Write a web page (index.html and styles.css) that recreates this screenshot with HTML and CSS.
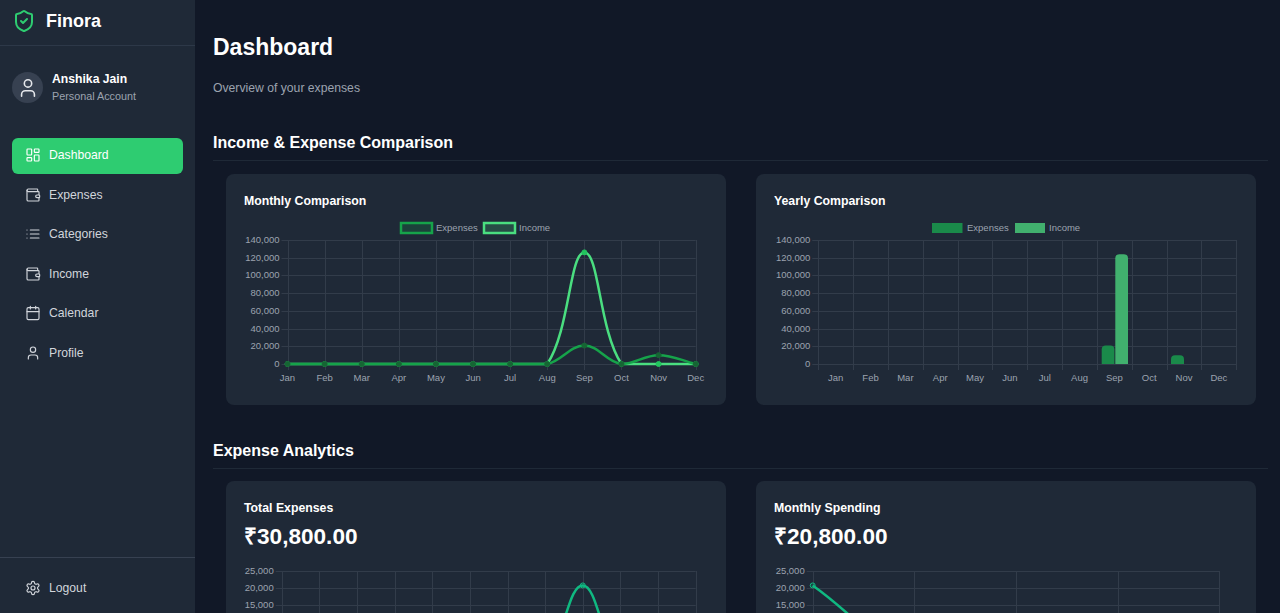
FILE: index.html
```html
<!DOCTYPE html>
<html lang="en">
<head>
    <meta charset="UTF-8">
    <title>Finora - Dashboard</title>
    <link rel="stylesheet" href="styles.css">
</head>
<body>
    <aside class="sidebar">
        <div class="logo">
            <svg class="logo-icon" viewBox="0 0 24 24"><path d="M20 13c0 5-3.5 7.5-7.66 8.95a1 1 0 0 1-.67-.01C7.5 20.5 4 18 4 13V6a1 1 0 0 1 1-1c2 0 4.5-1.2 6.24-2.72a1.17 1.17 0 0 1 1.52 0C14.51 3.81 17 5 19 5a1 1 0 0 1 1 1z"/><path d="m9 12 2 2 4-4"/></svg>
            <span class="logo-text">Finora</span>
        </div>
        <div class="user">
            <div class="avatar">
                <svg viewBox="0 0 24 24"><path d="M19 21v-2a4 4 0 0 0-4-4H9a4 4 0 0 0-4 4v2"/><circle cx="12" cy="7" r="4"/></svg>
            </div>
            <div>
                <div class="user-name">Anshika Jain</div>
                <div class="user-type">Personal Account</div>
            </div>
        </div>
        <nav class="nav">
            <a class="nav-item active">
                <svg viewBox="0 0 24 24"><rect x="3" y="3" width="7" height="9" rx="1"/><rect x="14" y="3" width="7" height="5" rx="1"/><rect x="14" y="12" width="7" height="9" rx="1"/><rect x="3" y="16" width="7" height="5" rx="1"/></svg>
                Dashboard
            </a>
            <a class="nav-item">
                <svg viewBox="0 0 24 24"><path d="M19 7V4a1 1 0 0 0-1-1H5a2 2 0 0 0 0 4h15a1 1 0 0 1 1 1v4h-3a2 2 0 0 0 0 4h3a1 1 0 0 0 1-1v-2a1 1 0 0 0-1-1"/><path d="M3 5v14a2 2 0 0 0 2 2h15a1 1 0 0 0 1-1v-4"/></svg>
                Expenses
            </a>
            <a class="nav-item">
                <svg viewBox="0 0 24 24"><path d="M8 6h13M8 12h13M8 18h13M3 6h.01M3 12h.01M3 18h.01"/></svg>
                Categories
            </a>
            <a class="nav-item">
                <svg viewBox="0 0 24 24"><path d="M19 7V4a1 1 0 0 0-1-1H5a2 2 0 0 0 0 4h15a1 1 0 0 1 1 1v4h-3a2 2 0 0 0 0 4h3a1 1 0 0 0 1-1v-2a1 1 0 0 0-1-1"/><path d="M3 5v14a2 2 0 0 0 2 2h15a1 1 0 0 0 1-1v-4"/></svg>
                Income
            </a>
            <a class="nav-item">
                <svg viewBox="0 0 24 24"><path d="M8 2v4M16 2v4"/><rect x="3" y="4" width="18" height="18" rx="2"/><path d="M3 10h18"/></svg>
                Calendar
            </a>
            <a class="nav-item">
                <svg viewBox="0 0 24 24"><path d="M19 21v-2a4 4 0 0 0-4-4H9a4 4 0 0 0-4 4v2"/><circle cx="12" cy="7" r="4"/></svg>
                Profile
            </a>
        </nav>
        <div class="sidebar-bottom">
            <a class="nav-item">
                <svg viewBox="0 0 24 24"><path d="M12.22 2h-.44a2 2 0 0 0-2 2v.18a2 2 0 0 1-1 1.73l-.43.25a2 2 0 0 1-2 0l-.15-.08a2 2 0 0 0-2.73.73l-.22.38a2 2 0 0 0 .73 2.73l.15.1a2 2 0 0 1 1 1.72v.51a2 2 0 0 1-1 1.74l-.15.09a2 2 0 0 0-.73 2.73l.22.38a2 2 0 0 0 2.73.73l.15-.08a2 2 0 0 1 2 0l.43.25a2 2 0 0 1 1 1.73V20a2 2 0 0 0 2 2h.44a2 2 0 0 0 2-2v-.18a2 2 0 0 1 1-1.73l.43-.25a2 2 0 0 1 2 0l.15.08a2 2 0 0 0 2.73-.73l.22-.39a2 2 0 0 0-.73-2.73l-.15-.08a2 2 0 0 1-1-1.74v-.5a2 2 0 0 1 1-1.74l.15-.09a2 2 0 0 0 .73-2.73l-.22-.38a2 2 0 0 0-2.73-.73l-.15.08a2 2 0 0 1-2 0l-.43-.25a2 2 0 0 1-1-1.73V4a2 2 0 0 0-2-2z"/><circle cx="12" cy="12" r="3"/></svg>
                Logout
            </a>
        </div>
    </aside>

    <main class="main">
        <h1 class="page-title">Dashboard</h1>
        <p class="page-sub">Overview of your expenses</p>

        <section class="section">
            <h2 class="section-title">Income &amp; Expense Comparison</h2>
            <div class="card-grid">
                <div class="card">
                    <h3 class="card-title">Monthly Comparison</h3>
                    <svg class="chart" id="monthlyComparison" width="464" height="169"></svg>
                </div>
                <div class="card">
                    <h3 class="card-title">Yearly Comparison</h3>
                    <svg class="chart" id="yearlyComparison" width="464" height="169"></svg>
                </div>
            </div>
        </section>

        <section class="section section-compact">
            <h2 class="section-title">Expense Analytics</h2>
            <div class="card-grid">
                <div class="card">
                    <h3 class="card-title">Total Expenses</h3>
                    <div class="card-amount">₹30,800.00</div>
                    <svg class="chart" id="totalExpenses" width="464" height="54"></svg>
                </div>
                <div class="card">
                    <h3 class="card-title">Monthly Spending</h3>
                    <div class="card-amount">₹20,800.00</div>
                    <svg class="chart" id="monthlySpending" width="464" height="54"></svg>
                </div>
            </div>
        </section>
    </main>

    <script src="charts.js"></script>
</body>
</html>
```

FILE: styles.css
```css
* {
    box-sizing: border-box;
}
html, body {
    height: 100%;
}
body {
    margin: 0;
    display: flex;
    overflow: hidden;
    font-family: "Liberation Sans", Arial, sans-serif;
    background-color: #111827;
    color: #fff;
}

/* sidebar */
.sidebar {
    width: 195px;
    height: 100vh;
    flex-shrink: 0;
    display: flex;
    flex-direction: column;
    background-color: #1f2937;
}
.logo {
    height: 46px;
    display: flex;
    align-items: center;
    gap: 10px;
    padding: 0 0 3px 12px;
    border-bottom: 1px solid #2d3848;
}
.logo-icon {
    width: 24px;
    height: 24px;
    fill: none;
    stroke: #2ecc71;
    stroke-width: 2;
    stroke-linecap: round;
    stroke-linejoin: round;
}
.logo-text {
    font-size: 18px;
    font-weight: 700;
}
.user {
    display: flex;
    align-items: center;
    gap: 9px;
    padding: 25px 12px 0;
}
.avatar {
    width: 31px;
    height: 31px;
    border-radius: 50%;
    display: flex;
    align-items: center;
    justify-content: center;
    background-color: #374151;
}
.avatar svg {
    width: 22px;
    height: 22px;
    fill: none;
    stroke: #e5e7eb;
    stroke-width: 1.75;
    stroke-linecap: round;
    stroke-linejoin: round;
}
.user-name {
    font-size: 12.2px;
    font-weight: 700;
    line-height: 16px;
}
.user-type {
    font-size: 10.8px;
    line-height: 16px;
    margin-top: 1px;
    color: #9ca3af;
}
.nav {
    display: flex;
    flex-direction: column;
    gap: 3.5px;
    padding: 34px 12px 0;
}
.nav-item {
    height: 36px;
    display: flex;
    align-items: center;
    gap: 8.5px;
    padding: 0 12px 2px 12.5px;
    border-radius: 6px;
    font-size: 12.2px;
    color: #d1d5db;
}
.nav-item svg {
    width: 16px;
    height: 16px;
    flex-shrink: 0;
    fill: none;
    stroke: currentColor;
    stroke-width: 1.75;
    stroke-linecap: round;
    stroke-linejoin: round;
}
.nav-item.active {
    background-color: #2ecc71;
    color: #fff;
}
.sidebar-bottom {
    margin-top: auto;
    padding: 13px 12px 6px;
    border-top: 1px solid #374151;
}

/* main content */
.main {
    flex: 1;
    height: 100vh;
    overflow: hidden;
    padding: 32px 12px 0 18px;
}
.page-title {
    margin: 0;
    font-size: 23px;
    line-height: 30px;
    font-weight: 700;
}
.page-sub {
    margin: 18px 0 0;
    padding-bottom: 1px;
    font-size: 12.2px;
    line-height: 16px;
    color: #9ca3af;
}
.section {
    margin-top: 36px;
}
.section-title {
    margin: 0;
    padding-bottom: 7px;
    font-size: 16px;
    line-height: 20px;
    font-weight: 700;
    border-bottom: 1px solid #1f2937;
}
.card-grid {
    display: grid;
    grid-template-columns: 500px 500px;
    gap: 30px;
    padding: 13px 0 0 13px;
}
.section-compact .card-grid {
    padding-top: 12px;
}
.card {
    padding: 19px 18px 18px;
    border-radius: 8px;
    background-color: #1f2937;
}
.card-title {
    margin: 0;
    font-size: 12.3px;
    line-height: 17px;
    font-weight: 700;
}
.card-amount {
    margin-top: 6px;
    font-size: 22.6px;
    line-height: 28px;
    font-weight: 700;
}
.chart {
    display: block;
    margin-top: 8px;
}
.chart text {
    font-family: "Liberation Sans", Arial, sans-serif;
    font-size: 9.5px;
    fill: #9ca3af;
}
.grid-line {
    stroke: #323c4a;
    stroke-width: 1;
}
```

FILE: charts.js
```js
// Small SVG charts for the dashboard

const months = ['Jan', 'Feb', 'Mar', 'Apr', 'May', 'Jun', 'Jul', 'Aug', 'Sep', 'Oct', 'Nov', 'Dec'];
const expenseData = [0, 0, 0, 0, 0, 0, 0, 0, 20800, 0, 10000, 0];
const incomeData = [0, 0, 0, 0, 0, 0, 0, 0, 126000, 0, 0, 0];

function drawGrid(box, yMax, yStep, xLines, lowestLabel) {
    let out = '';
    const toY = v => box.bottom - (v / yMax) * (box.bottom - box.top);

    for (let v = 0; v <= yMax; v += yStep) {
        const y = Math.round(toY(v)) + 0.5;
        out += `<line class="grid-line" x1="${box.left - 6}" x2="${box.right}" y1="${y}" y2="${y}"/>`;
        if (v >= (lowestLabel || 0)) {
            out += `<text x="${box.left - 8}" y="${toY(v) + 3}" text-anchor="end">${v.toLocaleString('en-US')}</text>`;
        }
    }
    xLines.forEach(x => {
        const px = Math.round(x) + 0.5;
        out += `<line class="grid-line" x1="${px}" x2="${px}" y1="${box.top}" y2="${box.bottom + 6}"/>`;
    });
    return out;
}

function xLabels(box, labels, positions) {
    return labels.map((label, i) =>
        `<text x="${positions[i]}" y="${box.bottom + 16.5}" text-anchor="middle">${label}</text>`
    ).join('');
}

// same curve as a tension 0.4 line, control points kept inside the plot
function splinePath(points, box) {
    const clampY = y => Math.min(box.bottom, Math.max(box.top, y));
    const t = 0.4;
    const ctrl = points.map((p, i) => {
        const prev = points[i - 1] || p;
        const next = points[i + 1] || p;
        const d1 = Math.hypot(p.x - prev.x, p.y - prev.y);
        const d2 = Math.hypot(next.x - p.x, next.y - p.y);
        const total = d1 + d2 || 1;
        const dx = next.x - prev.x;
        const dy = next.y - prev.y;
        return {
            inX: p.x - t * (d1 / total) * dx,
            inY: clampY(p.y - t * (d1 / total) * dy),
            outX: p.x + t * (d2 / total) * dx,
            outY: clampY(p.y + t * (d2 / total) * dy)
        };
    });
    let d = `M${points[0].x} ${points[0].y}`;
    for (let i = 1; i < points.length; i++) {
        d += `C${ctrl[i - 1].outX} ${ctrl[i - 1].outY} ${ctrl[i].inX} ${ctrl[i].inY} ${points[i].x} ${points[i].y}`;
    }
    return d;
}

function drawLine(box, values, yMax, color, markerFill, markerStroke, width) {
    const step = (box.right - box.left) / (values.length - 1);
    const points = values.map((v, i) => ({
        x: box.left + i * step,
        y: box.bottom - (v / yMax) * (box.bottom - box.top)
    }));
    let out = `<path d="${splinePath(points, box)}" fill="none" stroke="${color}" stroke-width="${width}"/>`;
    points.forEach(p => {
        out += `<circle cx="${p.x}" cy="${p.y}" r="2.5" fill="${markerFill}" stroke="${markerStroke}"/>`;
    });
    return out;
}

function roundedBar(x, width, top, bottom, color) {
    const r = 4;
    return `<path d="M${x} ${bottom}V${top + r}Q${x} ${top} ${x + r} ${top}H${x + width - r}Q${x + width} ${top} ${x + width} ${top + r}V${bottom}Z" fill="${color}"/>`;
}

function legendBox(x, width, y, height, fill, stroke) {
    const border = stroke ? `stroke="${stroke}" stroke-width="2.5"` : '';
    return `<rect x="${x}" y="${y}" width="${width}" height="${height}" fill="${fill}" ${border}/>`;
}

function evenSpots(box, count) {
    const step = (box.right - box.left) / (count - 1);
    return Array.from({ length: count }, (_, i) => box.left + i * step);
}

// Monthly Comparison
(function () {
    const box = { left: 43.5, right: 451.7, top: 22, bottom: 146 };
    const spots = evenSpots(box, 12);
    let out = drawGrid(box, 140000, 20000, spots);
    out += xLabels(box, months, spots);
    out += legendBox(157, 31, 5, 10, 'rgba(22,163,74,0.2)', '#16a34a');
    out += '<text x="192" y="13">Expenses</text>';
    out += legendBox(240, 31, 5, 10, 'rgba(74,222,128,0.2)', '#4ade80');
    out += '<text x="275" y="13">Income</text>';
    out += drawLine(box, incomeData, 140000, '#4ade80', '#22c55e', '#22c55e', 2.5);
    out += drawLine(box, expenseData, 140000, '#16a34a', '#166534', '#166534', 2.5);
    document.getElementById('monthlyComparison').innerHTML = out;
})();

// Yearly Comparison
(function () {
    const box = { left: 44.3, right: 462.3, top: 22, bottom: 146 };
    const step = (box.right - box.left) / 12;
    const edges = Array.from({ length: 13 }, (_, i) => box.left + i * step);
    const centers = months.map((_, i) => box.left + (i + 0.5) * step);
    const toY = v => box.bottom - (v / 140000) * (box.bottom - box.top);
    let out = drawGrid(box, 140000, 20000, edges);
    out += xLabels(box, months, centers);
    out += legendBox(158, 30.5, 5, 10, '#1a8a4a');
    out += '<text x="193" y="13">Expenses</text>';
    out += legendBox(241, 30, 5, 10, '#41b06e');
    out += '<text x="275" y="13">Income</text>';
    out += roundedBar(327.7, 12.7, toY(20800), box.bottom, '#1a8a4a');
    out += roundedBar(341.3, 12.7, toY(124000), box.bottom, '#41b06e');
    out += roundedBar(397, 13, toY(10000), box.bottom, '#1a8a4a');
    document.getElementById('yearlyComparison').innerHTML = out;
})();

// Total Expenses, only the top of this chart is on screen
(function () {
    const box = { left: 37.7, right: 451.7, top: 12, bottom: 98 };
    let out = drawGrid(box, 25000, 5000, evenSpots(box, 12), 15000);
    out += drawLine(box, expenseData, 25000, '#10b981', 'rgba(16,185,129,0.2)', '#10b981', 2.5);
    document.getElementById('totalExpenses').innerHTML = out;
})();

// Monthly Spending
(function () {
    const box = { left: 38.7, right: 445.3, top: 12, bottom: 98 };
    let out = drawGrid(box, 25000, 5000, evenSpots(box, 5), 15000);
    out += drawLine(box, [20800, 0, 0, 0, 0], 25000, '#10b981', 'rgba(16,185,129,0.2)', '#10b981', 2.5);
    document.getElementById('monthlySpending').innerHTML = out;
})();
```
